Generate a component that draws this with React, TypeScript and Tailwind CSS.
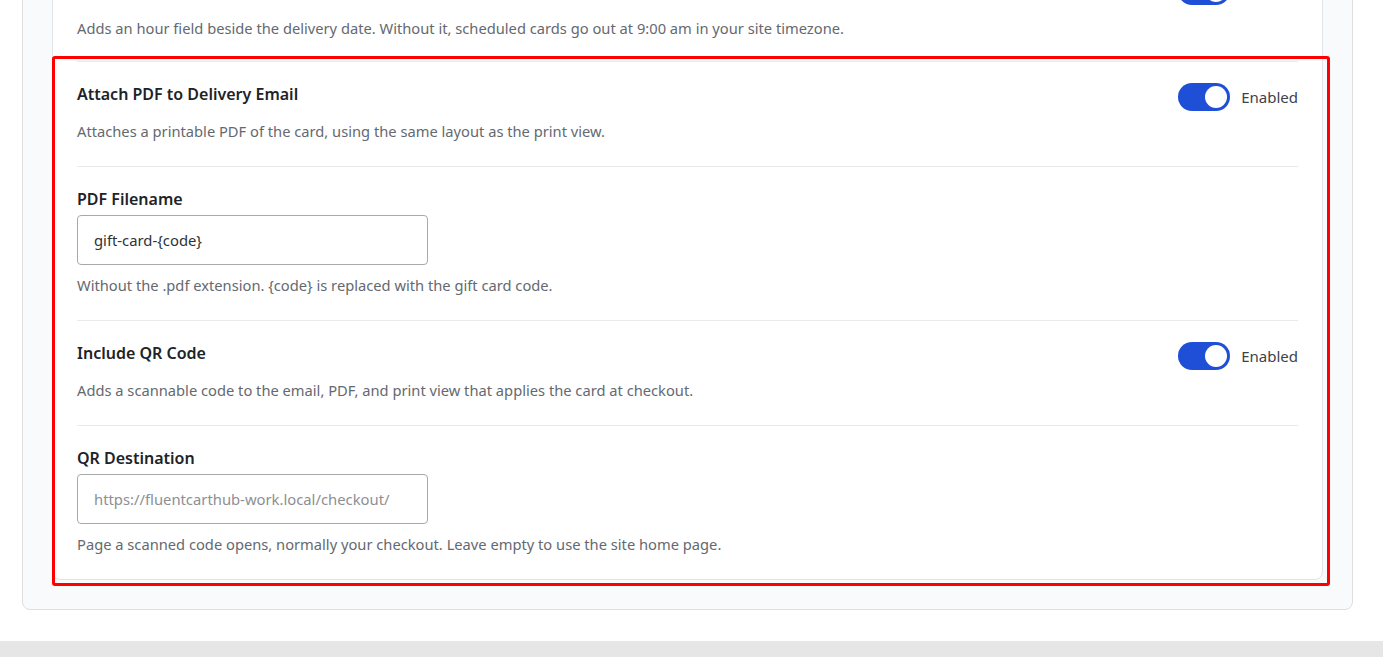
import React from "react";

const font = { fontFamily: '"Noto Sans", "Open Sans", sans-serif' };

function Toggle() {
  return (
    <div className="mt-px flex items-center gap-[11px]">
      <div className="flex h-[28px] w-[52px] items-center justify-end rounded-full bg-[#1f4fd6] px-[3px]">
        <div className="h-[22px] w-[22px] rounded-full bg-white" />
      </div>
      <span className="text-[15px] leading-[22px] text-[#3c434a]">Enabled</span>
    </div>
  );
}

function ToggleRow({
  title,
  desc,
  first,
  descMt = "mt-[9px]",
  pb = "pb-6",
}: {
  title: string;
  desc: string;
  first?: boolean;
  descMt?: string;
  pb?: string;
}) {
  return (
    <div className={`${first ? "" : "border-t border-[#e8eaed]"} pt-5 ${pb}`}>
      <div className="flex items-start justify-between">
        <div className="text-[16px] font-semibold leading-6 text-[#1d2327]">{title}</div>
        <Toggle />
      </div>
      <p className={`${descMt} text-[14.7px] leading-[22px] text-[#646970]`}>{desc}</p>
    </div>
  );
}

function InputRow({
  title,
  value,
  placeholder,
  desc,
}: {
  title: string;
  value?: string;
  placeholder?: string;
  desc: string;
}) {
  return (
    <div className="border-t border-[#e8eaed] pt-5 pb-6">
      <div className="text-[16px] font-semibold leading-6 text-[#1d2327]">{title}</div>
      <input
        readOnly
        value={value ?? ""}
        placeholder={placeholder}
        style={font}
        className="mt-1 block h-[50px] w-[351px] rounded-[4px] border border-[#a7aaad] bg-white pl-4 text-[14.8px] text-[#2c3338] outline-none placeholder:text-[#8c8f94]"
      />
      <p className="mt-[9px] text-[14.7px] leading-[22px] text-[#646970]">{desc}</p>
    </div>
  );
}

export default function App() {
  return (
    <div style={font} className="min-h-[657px] overflow-hidden bg-white">
      <div className="-mt-[75px] ml-[22px] w-[1331px] rounded-lg border border-[#dcdee2] bg-[#f8fafc] p-[29px]">
        <div className="rounded-lg border border-[#e2e4e7] bg-white px-6">
          <ToggleRow
            first
            title="Schedule Delivery Time"
            desc="Adds an hour field beside the delivery date. Without it, scheduled cards go out at 9:00 am in your site timezone."
            descMt="mt-3"
            pb="pb-[22px]"
          />
          <div className="relative">
            <ToggleRow
              title="Attach PDF to Delivery Email"
              desc="Attaches a printable PDF of the card, using the same layout as the print view."
            />
            <InputRow
              title="PDF Filename"
              value="gift-card-{code}"
              desc="Without the .pdf extension. {code} is replaced with the gift card code."
            />
            <ToggleRow
              title="Include QR Code"
              desc="Adds a scannable code to the email, PDF, and print view that applies the card at checkout."
            />
            <InputRow
              title="QR Destination"
              placeholder="https://fluentcarthub-work.local/checkout/"
              desc="Page a scanned code opens, normally your checkout. Leave empty to use the site home page."
            />
            <div className="pointer-events-none absolute left-[-25px] top-[-5px] h-[530px] w-[1278px] rounded-[3px] border-[3px] border-[#ff0000]" />
          </div>
        </div>
      </div>
      <div className="mt-[31px] h-[40px] bg-[#e6e6e6]" />
    </div>
  );
}
